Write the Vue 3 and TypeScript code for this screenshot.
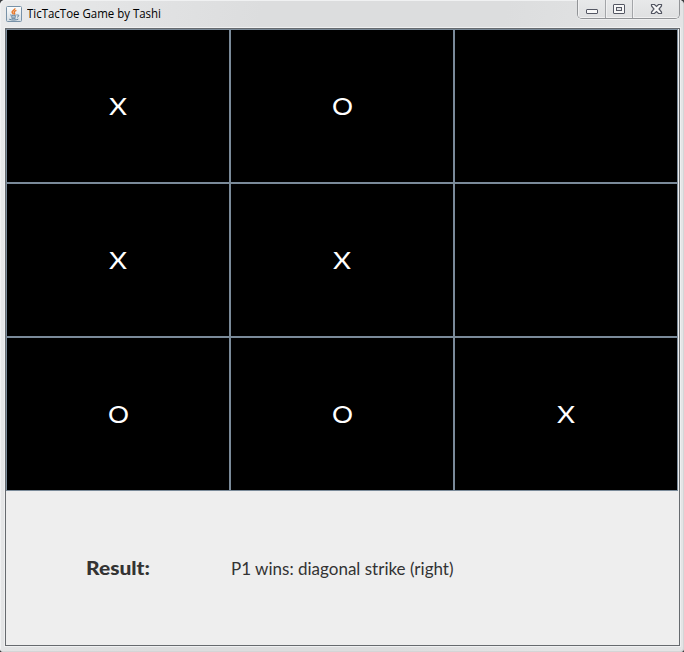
<script setup lang="ts">
import { ref } from 'vue'

type Mark = 'X' | 'O' | ''
const title = 'TicTacToe Game by Tashi'
const cells = ref<Mark[]>(['X', 'O', '', 'X', 'X', '', 'O', 'O', 'X'])
const result = ref('P1 wins: diagonal strike (right)')
</script>

<template>
  <div class="window">
    <header class="titlebar">
      <svg class="java" width="16" height="16" viewBox="0 0 16 16">
        <defs>
          <linearGradient id="tile" x1="0" y1="0" x2="0" y2="1">
            <stop offset="0" stop-color="#fdfdfd" />
            <stop offset="1" stop-color="#d5dde3" />
          </linearGradient>
        </defs>
        <rect x="0.5" y="0.5" width="15" height="15" rx="1" fill="url(#tile)" stroke="#7892a8" />
        <path d="M8.9 2.2C9.4 4 5.5 4.7 6.1 6.3C6.4 7.2 7.4 7.6 7.3 8.5M10.4 4.4C8.3 5.2 7.7 6 8.5 7C8.9 7.6 8.5 8.2 8.1 8.5" fill="none" stroke="#e8792b" stroke-width="1.4" />
        <path d="M4.2 8.9C5 9.5 9.5 9.5 10.6 8.9M4.9 10.7C6.5 11.3 8.8 11.2 10 10.7M5.4 12.1C6.8 12.6 8.6 12.5 9.6 12.1M3.2 13.2C5.5 14.4 10.4 14.2 12.3 13.1M11.2 9C13.4 8.5 13.2 10.6 11.1 11.2" fill="none" stroke="#587b98" stroke-width="1" />
      </svg>
      <svg class="title" width="150" height="26">
        <text x="0" y="18" textLength="134" lengthAdjust="spacingAndGlyphs">{{ title }}</text>
      </svg>
      <div class="controls">
        <button class="min" aria-label="Minimize">
          <svg width="27" height="18"><rect x="8.5" y="9.5" width="11" height="4" rx="0.5" fill="#f8f8f8" stroke="#555864" /></svg>
        </button>
        <button class="max" aria-label="Maximize">
          <svg width="27" height="18">
            <rect x="7.5" y="4.5" width="11" height="9" rx="0.5" fill="#f8f8f8" stroke="#555864" />
            <rect x="10.5" y="7.5" width="5" height="3" fill="#e4e5e7" stroke="#555864" />
          </svg>
        </button>
        <button class="close" aria-label="Close">
          <svg width="45" height="18"><path d="M18.5 4.5H21.5L23.5 6.5L25.5 4.5H28.5V6L26 9L28.5 12V13.5H25.5L23.5 11.5L21.5 13.5H18.5V12L21 9L18.5 6Z" fill="#f8f8f8" stroke="#555864" stroke-width="1.2" /></svg>
        </button>
      </div>
    </header>
    <main class="client">
      <section class="board">
        <div v-for="(mark, i) in cells" :key="i" class="cell">
          <svg v-if="mark" width="30" height="40">
            <text
              :x="mark === 'X' ? 6 : 5"
              y="29"
              :textLength="mark === 'X' ? 18 : 21"
              lengthAdjust="spacingAndGlyphs"
            >{{ mark }}</text>
          </svg>
        </div>
      </section>
      <footer class="status">
        <svg class="label" width="145" height="40">
          <text x="0" y="27" textLength="64" lengthAdjust="spacingAndGlyphs">Result:</text>
        </svg>
        <svg class="message" width="300" height="40">
          <text x="0" y="27" textLength="222.5" lengthAdjust="spacingAndGlyphs">{{ result }}</text>
        </svg>
      </footer>
    </main>
  </div>
</template>

<style>
body {
  margin: 0;
  background: #3b3d40;
}
</style>

<style scoped>
.window {
  box-sizing: border-box;
  width: 684px;
  height: 652px;
  padding: 0 4px 5px 5px;
  border-radius: 5px 5px 4px 4px;
  background: linear-gradient(100deg, #e9eaeb 0, #e2e3e4 130px, #dcddde 260px, #dcddde 500px, #e3e4e5 650px);
  box-shadow: inset 1px 1px 0 #f0f1f2, inset -1px -1px 0 #d4d5d6;
}
.titlebar {
  display: flex;
  height: 28px;
}
.java {
  margin: 6px 0 0 1px;
}
.title {
  margin-left: 5px;
}
.title text {
  font: 12px "Open Sans", "Noto Sans", sans-serif;
  fill: #000;
}
.controls {
  display: flex;
  box-sizing: border-box;
  width: 103px;
  height: 19px;
  margin-left: auto;
  border: 1px solid #929497;
  border-top: 0;
  border-radius: 0 0 5px 5px;
  overflow: hidden;
  box-shadow: 0 1px 0 #eeeff0;
}
button {
  box-sizing: border-box;
  padding: 0;
  border: 0;
  background: linear-gradient(#e8e9ea, #dfe0e1);
  box-shadow: inset 1px -1px 0 #f0f0f1;
}
button svg {
  display: block;
}
.min, .max {
  width: 28px;
  border-right: 1px solid #a3a5a8;
}
.max {
  width: 27px;
}
.close {
  width: 46px;
}
.client {
  box-sizing: border-box;
  width: 675px;
  height: 618px;
  border: 1px solid #666a6e;
  background: #eee;
  box-shadow: 0 0 0 1px #eff0f1;
}
.board {
  display: grid;
  grid-template-columns: repeat(3, 224px);
  grid-auto-rows: 154px;
}
.cell {
  display: flex;
  box-sizing: border-box;
  align-items: center;
  justify-content: center;
  border: 1px solid #7a8a99;
  background: #000;
}
.cell text {
  font: 24px Lato, sans-serif;
  fill: #fff;
}
.status {
  display: flex;
  height: 154px;
  align-items: center;
  padding-left: 80px;
}
.status text {
  fill: #333;
  font-family: Lato, sans-serif;
}
.label text {
  font-size: 19px;
  font-weight: 900;
}
.message text {
  font-size: 17px;
}
</style>
